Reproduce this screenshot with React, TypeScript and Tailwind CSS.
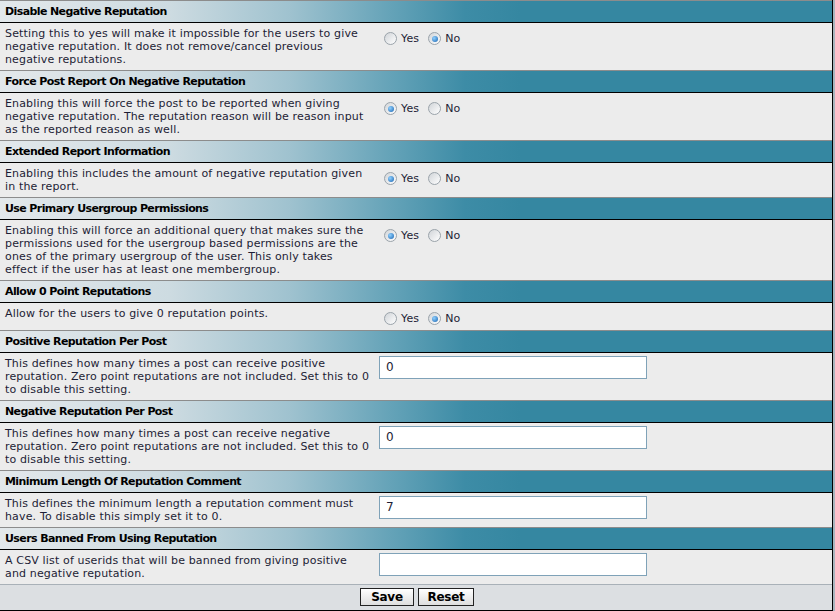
import React from 'react';

// settings rows: title, description lines, control
type Control =
  | { kind: 'yesno'; value: boolean }
  | { kind: 'text'; value: string };

interface Setting {
  title: string;
  lines: string[];
  control: Control;
}

const settings: Setting[] = [
  {
    title: 'Disable Negative Reputation',
    lines: [
      'Setting this to yes will make it impossible for the users to give',
      'negative reputation. It does not remove/cancel previous',
      'negative reputations.',
    ],
    control: { kind: 'yesno', value: false },
  },
  {
    title: 'Force Post Report On Negative Reputation',
    lines: [
      'Enabling this will force the post to be reported when giving',
      'negative reputation. The reputation reason will be reason input',
      'as the reported reason as well.',
    ],
    control: { kind: 'yesno', value: true },
  },
  {
    title: 'Extended Report Information',
    lines: [
      'Enabling this includes the amount of negative reputation given',
      'in the report.',
    ],
    control: { kind: 'yesno', value: true },
  },
  {
    title: 'Use Primary Usergroup Permissions',
    lines: [
      'Enabling this will force an additional query that makes sure the',
      'permissions used for the usergroup based permissions are the',
      'ones of the primary usergroup of the user. This only takes',
      'effect if the user has at least one membergroup.',
    ],
    control: { kind: 'yesno', value: true },
  },
  {
    title: 'Allow 0 Point Reputations',
    lines: ['Allow for the users to give 0 reputation points.'],
    control: { kind: 'yesno', value: false },
  },
  {
    title: 'Positive Reputation Per Post',
    lines: [
      'This defines how many times a post can receive positive',
      'reputation. Zero point reputations are not included. Set this to 0',
      'to disable this setting.',
    ],
    control: { kind: 'text', value: '0' },
  },
  {
    title: 'Negative Reputation Per Post',
    lines: [
      'This defines how many times a post can receive negative',
      'reputation. Zero point reputations are not included. Set this to 0',
      'to disable this setting.',
    ],
    control: { kind: 'text', value: '0' },
  },
  {
    title: 'Minimum Length Of Reputation Comment',
    lines: [
      'This defines the minimum length a reputation comment must',
      'have. To disable this simply set it to 0.',
    ],
    control: { kind: 'text', value: '7' },
  },
  {
    title: 'Users Banned From Using Reputation',
    lines: [
      'A CSV list of userids that will be banned from giving positive',
      'and negative reputation.',
    ],
    control: { kind: 'text', value: '' },
  },
];

function Radio({ checked, label }: { checked: boolean; label: string }) {
  return (
    <span className="flex items-center gap-[4px]">
      <span className="flex size-[13px] items-center justify-center rounded-full border border-[#9aa3aa] bg-[linear-gradient(135deg,#d0d4d8,#ffffff)]">
        {checked && (
          <span className="size-[6px] rounded-full bg-[radial-gradient(circle_at_35%_35%,#8fd0ff,#1a64b0)]" />
        )}
      </span>
      <span>{label}</span>
    </span>
  );
}

function SettingRow({ s }: { s: Setting }) {
  return (
    <div>
      <div className="h-[23px] border-t border-t-[#8c8c8c] border-b border-b-black bg-[linear-gradient(90deg,#e3e8eb_0px,#cddbe1_170px,#9fc2cf_290px,#65a3b8_390px,#3d8ca6_465px,#3587a1_520px)] pl-[5px] font-bold leading-[21px] tracking-[-0.6px] text-black">
        {s.title}
      </div>
      <div className="flex items-start">
        <div className="w-[374px] shrink-0 px-[5px] py-[4px] text-[#1d1d35]">
          {s.lines.map((l, i) => (
            <div key={i} className="whitespace-nowrap">
              {l}
            </div>
          ))}
        </div>
        {s.control.kind === 'yesno' ? (
          <div className="flex items-start gap-[9px] pt-[9px] pb-[5px] pl-[10px] text-[#1d1d35]">
            <Radio checked={s.control.value} label="Yes" />
            <Radio checked={!s.control.value} label="No" />
          </div>
        ) : (
          <div className="pt-[3px] pb-[7px] pl-[5px]">
            <div className="h-[23px] w-[268px] border border-[#7fa2b8] bg-white pl-[6px] text-[12px] leading-[21px] text-[#1d1d35]">
              {s.control.value}
            </div>
          </div>
        )}
      </div>
    </div>
  );
}

export default function App() {
  return (
    <div className="h-[611px] w-[835px] bg-[#a9b5bd] font-['DejaVu_Sans',sans-serif] text-[11px] leading-[13px] tracking-[0.15px]">
      <div className="w-[833px] border-r border-black bg-[#ececec]">
        {settings.map((s) => (
          <SettingRow key={s.title} s={s} />
        ))}
        <div className="flex h-[27px] justify-center gap-[4px] border-t border-t-[#a9b1b8] border-b border-b-black bg-[#dcdfe2] pt-[3px] pl-[2px] tracking-[-0.3px]">
          <button className="h-[18px] w-[54px] border border-[#222] bg-[linear-gradient(#ffffff,#dedede)] font-bold text-[12px] leading-[16px] text-black">
            Save
          </button>
          <button className="h-[18px] w-[56px] border border-[#222] bg-[linear-gradient(#ffffff,#dedede)] font-bold text-[12px] leading-[16px] text-black">
            Reset
          </button>
        </div>
      </div>
    </div>
  );
}
